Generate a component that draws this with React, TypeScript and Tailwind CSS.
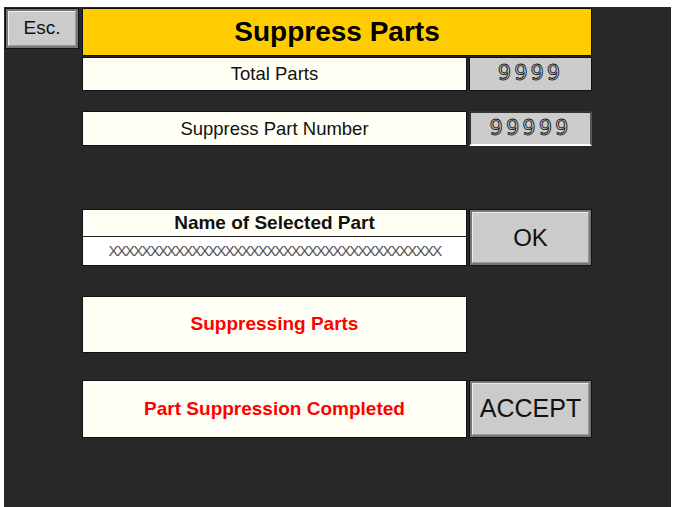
// Suppress Parts — HMI screen

const font = "font-['Liberation_Sans',Arial,sans-serif]";

function Bevel({ children, className = '' }: { children: React.ReactNode; className?: string }) {
  return (
    <div className={`border border-[#111] bg-[#777] p-[2px] ${className}`}>
      <div className="flex h-full items-center justify-center border-t border-l border-[#eee] border-b border-r border-b-[#999] border-r-[#999] bg-[#cbcbcb]">
        {children}
      </div>
    </div>
  );
}

const digits =
  "text-[21px] tracking-[3px] text-transparent [-webkit-text-stroke:0.9px_#111] font-['DejaVu_Sans',sans-serif]";

export default function App() {
  return (
    <div className={`h-[507px] w-[675px] bg-white pl-[4px] pt-[7px] ${font}`}>
      <div className="flex h-[500px] w-[667px] items-start gap-[3px] bg-[#282828] pl-[1px] pt-[1px]">
        {/* Esc */}
        <Bevel className="h-[41px] w-[74px]">
          <span className="text-[19px] text-[#111]">Esc.</span>
        </Bevel>

        <div className="flex w-[510px] flex-col">
          {/* Title */}
          <div className="flex h-[48px] items-center justify-center border border-[#111] bg-[#ffcc00]">
            <span className="text-[28px] font-bold text-black">Suppress Parts</span>
          </div>

          {/* Total Parts */}
          <div className="mt-[1px] flex h-[34px] gap-[2px]">
            <div className="flex w-[385px] items-center justify-center border border-[#111] bg-[#fffff5] text-[18.5px] text-[#111]">
              Total Parts
            </div>
            <div className="flex flex-1 items-center justify-center border border-[#111] bg-[#cccccc]">
              <span className={digits}>9999</span>
            </div>
          </div>

          {/* Suppress Part Number */}
          <div className="mt-[20px] flex h-[35px] gap-[2px]">
            <div className="flex w-[385px] items-center justify-center border border-[#111] bg-[#fffff5] text-[18.5px] text-[#111]">
              Suppress Part Number
            </div>
            <div className="flex flex-1 items-center justify-center border-2 border-[#333] border-b-white border-r-[#555] bg-[#cccccc]">
              <span className={digits}>99999</span>
            </div>
          </div>

          {/* Name of Selected Part */}
          <div className="mt-[63px] flex h-[57px] gap-[2px]">
            <div className="flex w-[385px] flex-col border border-[#111]">
              <div className="flex h-[27px] items-center justify-center border-b border-[#222] bg-[#fffff5] text-[19px] font-bold text-[#111]">
                Name of Selected Part
              </div>
              <div className="flex flex-1 items-center justify-center overflow-hidden bg-white text-[15px] tracking-[-1.7px] text-[#555]">
                {'X'.repeat(40)}
              </div>
            </div>
            <Bevel className="flex-1">
              <span className="text-[24px] text-[#111]">OK</span>
            </Bevel>
          </div>

          {/* Suppressing Parts */}
          <div className="mt-[30px] flex h-[57px] w-[385px] items-center justify-center border border-[#111] bg-[#fffff5] text-[19px] font-bold text-[#ff0000]">
            Suppressing Parts
          </div>

          {/* Completed */}
          <div className="mt-[27px] flex h-[58px] gap-[2px]">
            <div className="flex w-[385px] items-center justify-center border border-[#111] bg-[#fffff5] text-[19px] font-bold text-[#ff0000]">
              Part Suppression Completed
            </div>
            <Bevel className="flex-1">
              <span className="text-[25px] text-[#111]">ACCEPT</span>
            </Bevel>
          </div>
        </div>
      </div>
    </div>
  );
}
